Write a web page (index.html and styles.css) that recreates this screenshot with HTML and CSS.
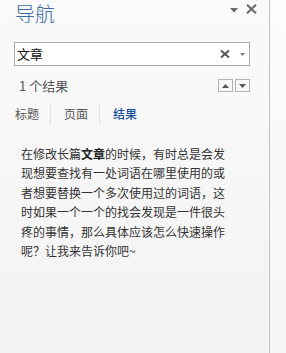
FILE: index.html
```html
<!DOCTYPE html>
<html lang="zh-CN">
<head>
<meta charset="utf-8">
<title>导航</title>
<link rel="stylesheet" href="styles.css">
</head>
<body>
<div class="page">
  <div class="pane">
    <div class="header">
      <div class="title">导航</div>
      <div class="header-tools">
        <svg class="menu-arrow" width="8" height="5" viewBox="0 0 8 5"><path d="M0 0H8L4 4.5Z" fill="#6a6a6a"/></svg>
        <svg class="close" width="11" height="10" viewBox="0 0 11 10"><path d="M1 0.8L10 9.2M10 0.8L1 9.2" stroke="#666" stroke-width="2"/></svg>
      </div>
    </div>
    <div class="search">
      <span class="search-text">文章</span>
      <svg class="clear" width="10" height="8" viewBox="0 0 10 8"><path d="M1 0.5L9 7.5M9 0.5L1 7.5" stroke="#555" stroke-width="2"/></svg>
      <svg class="drop" width="5" height="3" viewBox="0 0 5 3"><path d="M0 0H5L2.5 3Z" fill="#777"/></svg>
    </div>
    <div class="results">
      <span class="count">1 个结果</span>
      <div class="nav-btns">
        <div class="nav-btn"><svg width="7" height="4" viewBox="0 0 7 4"><path d="M0 4H7L3.5 0Z" fill="#555"/></svg></div>
        <div class="nav-btn"><svg width="7" height="4" viewBox="0 0 7 4"><path d="M0 0H7L3.5 4Z" fill="#555"/></svg></div>
      </div>
    </div>
    <div class="tabs">
      <span class="tab">标题</span>
      <span class="sep"></span>
      <span class="tab">页面</span>
      <span class="sep"></span>
      <span class="tab active">结果</span>
    </div>
    <p class="snippet">在修改长篇<span class="hit">文章</span>的时候，有时总是会发现想要查找有一处词语在哪里使用的或者想要替换一个多次使用过的词语，这时如果一个一个的找会发现是一件很头疼的事情，那么具体应该怎么快速操作呢？让我来告诉你吧~</p>
  </div>
  <div class="divider"></div>
  <div class="side"></div>
</div>
</body>
</html>
```
FILE: styles.css
```css
html, body {
  margin: 0;
  padding: 0;
}
body {
  font-family: "Noto Sans CJK SC", "Noto Sans", sans-serif;
  background: #f8f8f8;
}
.page {
  display: flex;
  width: 286px;
  height: 353px;
}
.pane {
  width: 269px;
  background: linear-gradient(#fafafa, #f3f3f3);
  display: flex;
  flex-direction: column;
}
.divider {
  width: 1px;
  background: #c4c4c4;
}
.side {
  flex: 1;
  background: linear-gradient(#fcfcfc, #f5f5f5);
}
.header {
  display: flex;
  align-items: center;
  height: 28px;
  padding-left: 15px;
}
.title {
  font-size: 20px;
  font-weight: 300;
  line-height: 28px;
  color: #3a6aa0;
}
.header-tools {
  margin-left: auto;
  display: flex;
  align-items: center;
  gap: 8px;
  padding-right: 12px;
  margin-top: -10px;
}
.menu-arrow {
  margin-top: 2px;
}
.search {
  margin: 14px 0 0 14px;
  width: 236px;
  height: 24px;
  box-sizing: border-box;
  border: 1px solid #a9a9a9;
  background: #fff;
  display: flex;
  align-items: center;
  padding: 0 4px 0 2px;
}
.search-text {
  font-size: 13px;
  color: #111;
  line-height: 22px;
}
.clear {
  margin-left: auto;
}
.drop {
  margin-left: 10px;
}
.results {
  display: flex;
  align-items: center;
  margin: 13px 0 0 19px;
  width: 231px;
  height: 13px;
}
.count {
  font-size: 13px;
  color: #555;
  line-height: 13px;
}
.nav-btns {
  margin-left: auto;
  display: flex;
  gap: 2px;
}
.nav-btn {
  width: 15px;
  height: 13px;
  box-sizing: border-box;
  border: 1px solid #b4b4b4;
  background: #f7f7f7;
  display: flex;
  align-items: center;
  justify-content: center;
}
.tabs {
  display: flex;
  align-items: center;
  margin: 11px 0 0 15px;
  height: 22px;
}
.tab {
  font-size: 12px;
  color: #555;
  line-height: 22px;
}
.tab.active {
  color: #1a4f9c;
  font-weight: 500;
}
.sep {
  width: 1px;
  height: 22px;
  background: #e2e2e2;
  margin: 0 13px 0 11px;
}
.snippet {
  margin: 19px 0 0 21px;
  width: 208px;
  font-size: 12px;
  line-height: 19.4px;
  color: #333;
}
.hit {
  font-weight: bold;
  color: #222;
}
```
